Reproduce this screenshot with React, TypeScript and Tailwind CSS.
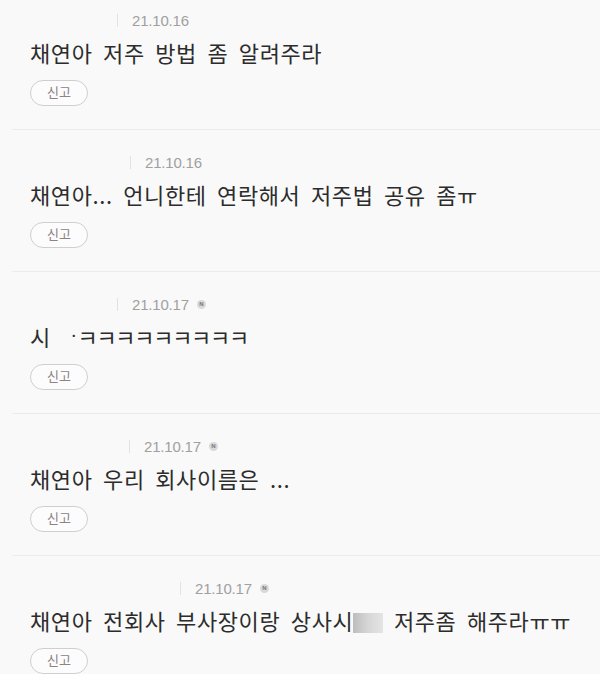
import * as React from 'react';

interface Comment {
  pad: string;
  date: string;
  isNew: boolean;
  body: React.ReactNode;
}

const comments: Comment[] = [
  { pad: 'pl-[87px]', date: '21.10.16', isNew: false, body: '채연아 저주 방법 좀 알려주라' },
  { pad: 'pl-[100px]', date: '21.10.16', isNew: false, body: '채연아... 언니한테 연락해서 저주법 공유 좀ㅠ' },
  {
    pad: 'pl-[87px]',
    date: '21.10.17',
    isNew: true,
    body: (
      <>
        시<span className="inline-block w-[20px]" />
        <span className="text-[12px] align-top">˙</span>
        <span className="tracking-[-1.3px]">ㅋㅋㅋㅋㅋㅋㅋㅋㅋ</span>
      </>
    ),
  },
  { pad: 'pl-[99px]', date: '21.10.17', isNew: true, body: '채연아 우리 회사이름은 ...' },
  {
    pad: 'pl-[150px]',
    date: '21.10.17',
    isNew: true,
    body: (
      <>
        채연아 전회사 부사장이랑 상사시
        <span className="inline-block w-[30px] h-[20px] align-[-3px] bg-gradient-to-r from-[#bdbdbd] via-[#d6d6d6] to-[#e4e4e4]" />{' '}
        저주좀 해주라ㅠㅠ
      </>
    ),
  },
];

const CommentRow: React.FC<{ c: Comment; first: boolean }> = ({ c, first }) => {
  return (
    <div className={`ml-[12px] border-b border-[#ececec] pl-[18px] pb-[23px] ${first ? 'pt-[12px]' : 'pt-[24px]'}`}>
      <div className={`flex items-center h-[16px] ${c.pad}`}>
        <span className="w-px h-[13px] bg-[#e2e2e2]" />
        <span className="ml-[14px] text-[15px] leading-none text-[#a0a0a0] tracking-[-0.2px]">{c.date}</span>
        {c.isNew && (
          <span className="ml-[8px] w-[9px] h-[9px] rounded-full bg-[#d9d9d9] text-[6px] leading-[9px] text-center text-[#777] font-bold">
            N
          </span>
        )}
      </div>
      <div
        className="mt-[10px] h-[28px] leading-[28px] text-[22px] tracking-[0.6px] [word-spacing:5px] text-[#2c2c2c] whitespace-nowrap"
        style={{ fontFamily: '"Noto Sans CJK KR", sans-serif' }}
      >
        {c.body}
      </div>
      <button className="mt-[14px] w-[58px] h-[26px] rounded-full border border-[#cfcfcf] bg-[#fcfcfc] text-[13px] text-[#8e8283] flex items-center justify-center">
        신고
      </button>
    </div>
  );
};

export default function App() {
  return (
    <div
      className="w-[600px] h-[674px] overflow-hidden bg-[#f9f9f9]"
      style={{ fontFamily: '"Liberation Sans", "Noto Sans CJK KR", sans-serif' }}
    >
      {comments.map((c, i) => (
        <CommentRow key={i} c={c} first={i === 0} />
      ))}
    </div>
  );
}
